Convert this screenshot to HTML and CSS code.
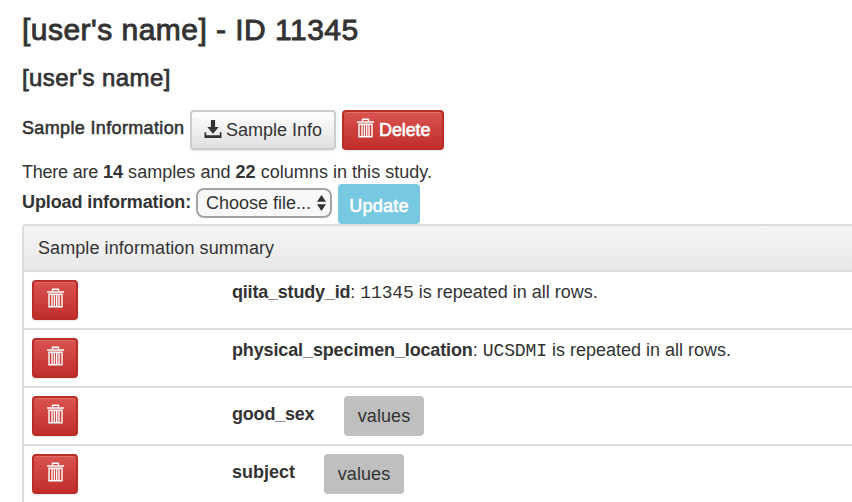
FILE: index.html
```html
<!DOCTYPE html>
<html lang="en">
<head>
<meta charset="utf-8">
<title>Sample Information</title>
<link rel="stylesheet" href="styles.css">
</head>
<body>
<svg class="defs" width="0" height="0">
  <symbol id="trash" viewBox="0 0 17 20">
    <path d="M0 4h17M5.5 3.8V1.2h6v2.6M2 6.2h13v12.6H2zM5 6v13M7.4 6v13M9.7 6v13M12 6v13" fill="none" stroke="currentColor" stroke-width="1.4"/>
  </symbol>
</svg>
<main class="page">
  <h1 class="title"><span>[user's name] - ID 11345</span></h1>
  <h2 class="alias"><span>[user's name]</span></h2>
  <div class="toolbar">
    <span class="section">Sample Information</span>
    <button class="btn btn-default"><svg class="download" viewBox="0 0 18 18"><path d="M6.9 0h4.2v7h3.6L9 13.7 3.3 7h3.6zM.5 12.2h1.7v3h13.6v-3h1.7V18H.5z" fill="currentColor"/></svg><span class="info-text">Sample Info</span></button>
    <button class="btn btn-danger delete"><svg class="trash"><use href="#trash"/></svg><span class="delete-text">Delete</span></button>
  </div>
  <p class="counts"><span class="lead">There are</span> <b>14</b> samples and <b>22</b> columns in this study.</p>
  <div class="upload">
    <b class="upload-label">Upload information:</b>
    <div class="select"><span class="select-text">Choose file...</span><svg class="arrows" viewBox="0 0 9 16"><path d="M0 6.8 4.5 0 9 6.8zM0 9.2h9L4.5 16z" fill="#333"/></svg></div>
    <button class="btn btn-info"><span>Update</span></button>
  </div>
  <section class="panel">
    <header class="panel-heading"><span>Sample information summary</span></header>
    <div class="row"><button class="btn btn-danger"><svg class="trash"><use href="#trash"/></svg></button><div class="cell"><b class="name-study">qiita_study_id</b>: <code>11345</code> <span>is repeated in all rows.</span></div></div>
    <div class="row"><button class="btn btn-danger"><svg class="trash"><use href="#trash"/></svg></button><div class="cell"><b class="name-location">physical_specimen_location</b>: <code>UCSDMI</code> <span>is repeated in all rows.</span></div></div>
    <div class="row"><button class="btn btn-danger"><svg class="trash"><use href="#trash"/></svg></button><div class="cell field"><b class="name-sex">good_sex</b><button class="btn btn-values">values</button></div></div>
    <div class="row"><button class="btn btn-danger"><svg class="trash"><use href="#trash"/></svg></button><div class="cell field"><b class="name-subject">subject</b><button class="btn btn-values">values</button></div></div>
  </section>
</main>
</body>
</html>
```
FILE: styles.css
```css
* { box-sizing: border-box; }
html, body { height: 502px; overflow: hidden; }
body { margin: 0; background: #fff; color: #333; font: 18px/26px "Liberation Sans", Arial, sans-serif; }
.defs { display: block; }
.page { padding-left: 22px; white-space: nowrap; }
h1, h2, p { margin: 0; font-weight: 400; }
.title { height: 60px; padding-top: 12px; font-size: 30px; line-height: 36px; letter-spacing: .47px; -webkit-text-stroke: .9px; }
.alias { height: 50px; padding-top: 4px; font-size: 24px; line-height: 28px; letter-spacing: .42px; -webkit-text-stroke: .75px; }
.toolbar { display: flex; height: 50px; }
.section { width: 168px; padding-top: 5px; letter-spacing: .35px; -webkit-text-stroke: .55px; }
.btn { display: flex; align-items: center; height: 40px; margin: 0; padding: 0; border: 2px solid; border-radius: 4px; color: #333; font: inherit; }
.btn-default { width: 146px; margin-right: 6px; padding-left: 12px; border-color: #ccc; background: linear-gradient(#fff, #e0e0e0); box-shadow: 0 1px 2px rgba(0,0,0,.1); }
.download { width: 18px; height: 18px; margin: -2px 4px 0 0; }
.btn-danger { justify-content: center; width: 46px; border-color: #b92c28; background: linear-gradient(#d9534f, #c12e2a); color: #fff; box-shadow: inset 0 1px 0 rgba(255,255,255,.15), 0 1px 2px rgba(0,0,0,.1); }
.trash { display: block; width: 17px; height: 20px; margin-top: -4px; }
.delete { width: 102px; justify-content: flex-start; padding-left: 13px; }
.delete .trash { margin-right: 5px; }
.delete-text { letter-spacing: -.1px; }
.delete-text, .btn-info { -webkit-text-stroke: .6px; }
.counts { height: 24px; line-height: 24px; letter-spacing: .03px; }
.lead { letter-spacing: -.23px; }
.upload { display: flex; height: 40px; }
.upload-label { width: 174px; padding-top: 5px; letter-spacing: -.1px; }
.select { display: flex; align-items: center; width: 136px; height: 30px; margin: 4px 6px 0 0; padding-left: 8px; border: 2px solid #a3a3a3; border-radius: 8px; background: #f8f8f8; }
.select-text { width: 111px; }
.arrows { width: 9px; height: 16px; }
.btn-info { justify-content: center; width: 82px; border-color: #76c9e1; background: #76c9e1; color: #fff; padding-top: 4px; letter-spacing: .25px; }
.panel { width: 860px; border: 2px solid #ddd; border-radius: 4px; }
.panel-heading { height: 46px; padding: 9px 15px 9px 14px; border-bottom: 2px solid #ddd; background: linear-gradient(#f5f5f5, #e8e8e8); letter-spacing: .08px; }
.row { display: flex; height: 58px; padding: 8px; border-bottom: 2px solid #ddd; }
.cell { margin: -1px 0 0 154px; }
.field { display: flex; margin-top: 0; }
.field b { padding-top: 5px; }
.name-study { letter-spacing: -.2px; }
.name-location { letter-spacing: -.13px; }
.name-sex { width: 112px; letter-spacing: -.2px; }
.name-subject { width: 92px; }
.btn-values { justify-content: center; width: 80px; border-color: #bfbfbf; background: #bfbfbf; letter-spacing: .1px; }
code { font: 18px/20px "Liberation Mono", monospace; letter-spacing: -.1px; }
```
